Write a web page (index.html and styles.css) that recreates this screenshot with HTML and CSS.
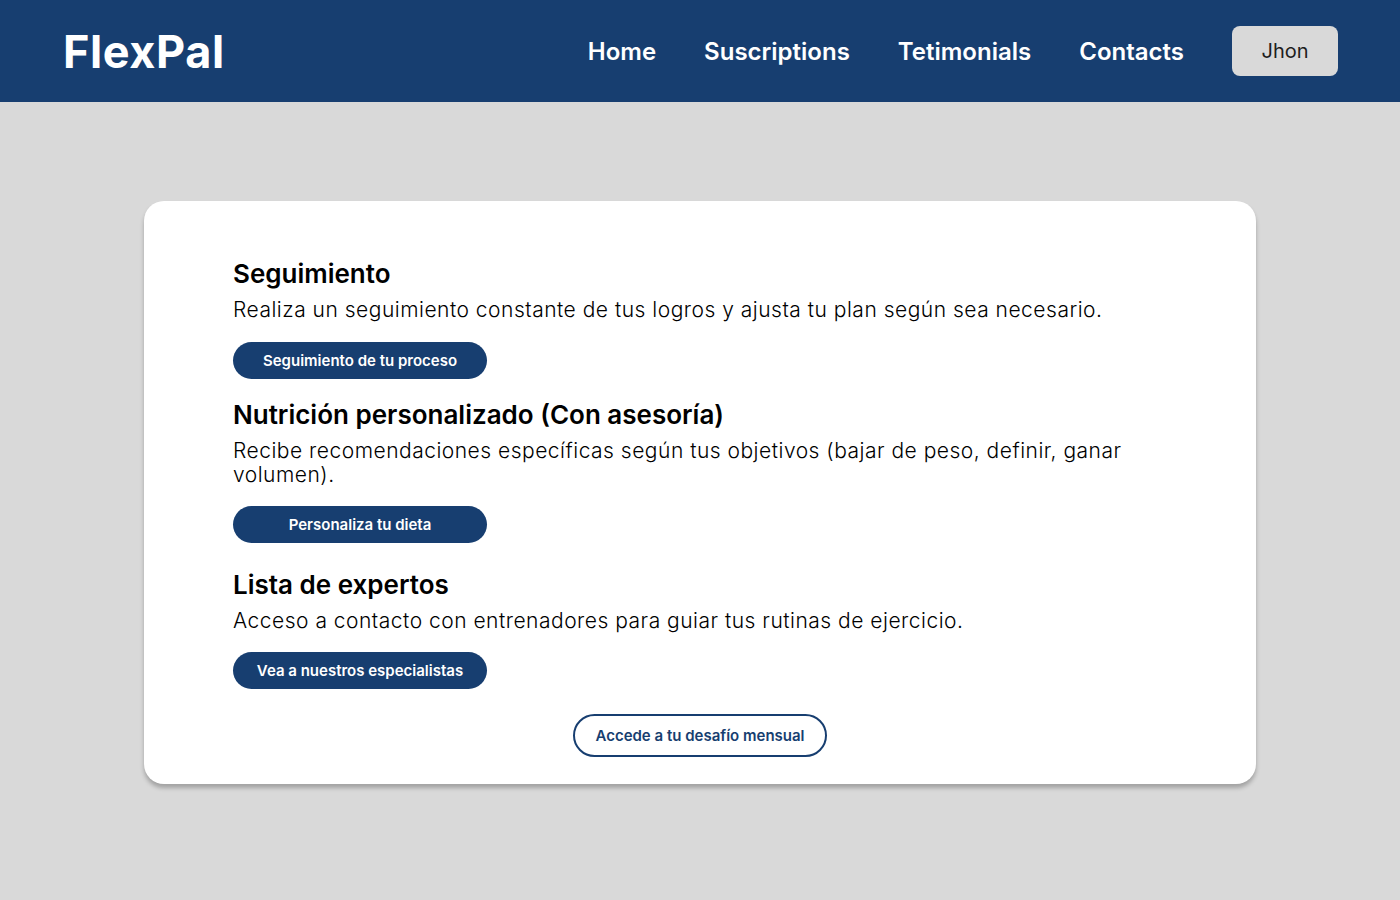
FILE: index.html
```html
<!DOCTYPE html>
<html lang="es">
<head>
<meta charset="utf-8">
<title>FlexPal</title>
<link rel="stylesheet" href="styles.css">
</head>
<body>
<header class="topbar">
  <div class="logo">FlexPal</div>
  <nav class="nav">
    <a class="nav-link" href="#">Home</a>
    <a class="nav-link" href="#">Suscriptions</a>
    <a class="nav-link" href="#">Tetimonials</a>
    <a class="nav-link" href="#">Contacts</a>
    <button class="user-btn">Jhon</button>
  </nav>
</header>
<main class="main">
  <section class="card">
    <div class="feature">
      <h2 class="feature-title">Seguimiento</h2>
      <p class="feature-text">Realiza un seguimiento constante de tus logros y ajusta tu plan según sea necesario.</p>
      <button class="pill">Seguimiento de tu proceso</button>
    </div>
    <div class="feature feature-mid">
      <h2 class="feature-title">Nutrición personalizado (Con asesoría)</h2>
      <p class="feature-text">Recibe recomendaciones específicas según tus objetivos (bajar de peso, definir, ganar volumen).</p>
      <button class="pill">Personaliza tu dieta</button>
    </div>
    <div class="feature feature-last">
      <h2 class="feature-title">Lista de expertos</h2>
      <p class="feature-text">Acceso a contacto con entrenadores para guiar tus rutinas de ejercicio.</p>
      <button class="pill">Vea a nuestros especialistas</button>
    </div>
    <div class="cta-row">
      <button class="outline-btn">Accede a tu desafío mensual</button>
    </div>
  </section>
</main>
</body>
</html>
```
FILE: styles.css
```css
* { box-sizing: border-box; }
html, body { margin: 0; padding: 0; }
body {
  font-family: Inter, "Noto Sans", sans-serif;
  background: #d9d9d9;
  min-height: 900px;
  color: #000;
}
.topbar {
  height: 102px;
  background: #173e70;
  display: flex;
  align-items: center;
  justify-content: space-between;
  padding: 0 62px 0 63px;
}
.logo {
  color: #fff;
  font-size: 45px;
  font-weight: 700;
  letter-spacing: 0.6px;
}
.nav {
  display: flex;
  align-items: center;
  gap: 48px;
}
.nav-link {
  color: #fff;
  text-decoration: none;
  font-size: 24px;
  font-weight: 600;
}
.user-btn {
  width: 106px;
  height: 50px;
  border: none;
  border-radius: 8px;
  background: #d9d9d9;
  color: #1e1e1e;
  font-family: Inter, sans-serif;
  font-size: 20px;
  font-weight: 400;
}
.main {
  padding-top: 99px;
  display: flex;
  justify-content: center;
}
.card {
  width: 1112px;
  background: #fff;
  border-radius: 20px;
  box-shadow: 0 4px 4px rgba(0,0,0,0.25);
  padding: 57px 89px 27px 89px;
  display: flex;
  flex-direction: column;
}
.feature {
  display: flex;
  flex-direction: column;
  align-items: flex-start;
  margin-bottom: 20px;
}
.feature-mid .pill { margin-top: -1px; }
.feature-last { margin-top: 6px; margin-bottom: 25px; }
.feature-title {
  margin: 0;
  font-size: 26px;
  line-height: 32px;
  font-weight: 600;
}
.feature-text {
  margin: 8px 0 20px 0;
  font-size: 21px;
  line-height: 24px;
  font-weight: 300;
  letter-spacing: 0.5px;
}
.feature-last .feature-text { margin-top: 8px; margin-bottom: 19px; }
.pill {
  width: 254px;
  height: 37px;
  border: none;
  border-radius: 19px;
  background: #173e70;
  color: #fff;
  font-family: Inter, sans-serif;
  font-size: 15px;
  font-weight: 600;
}
.cta-row {
  display: flex;
  justify-content: center;
}
.outline-btn {
  width: 254px;
  height: 43px;
  border: 2px solid #173e70;
  border-radius: 22px;
  background: #fff;
  color: #173e70;
  font-family: Inter, sans-serif;
  font-size: 15px;
  font-weight: 600;
}
```
